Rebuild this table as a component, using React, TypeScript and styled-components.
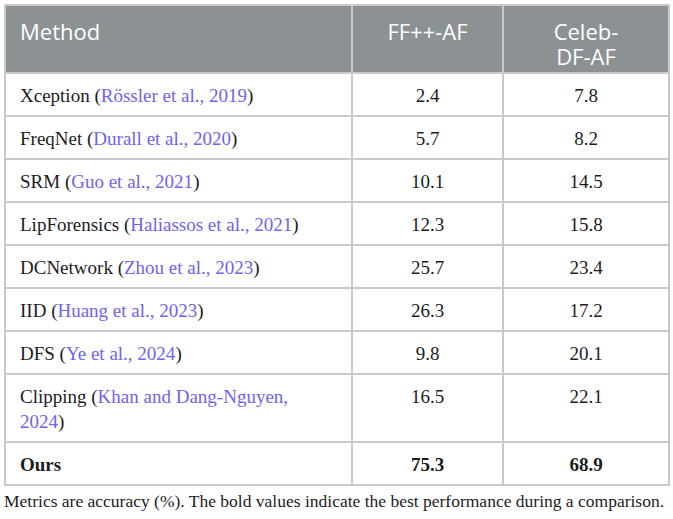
import styled, { createGlobalStyle } from "styled-components";

const GlobalStyle = createGlobalStyle`
  body {
    margin: 0;
    background: #ffffff;
  }
`;

type Row = {
  method: string;
  cite?: string;
  ff: string;
  celeb: string;
  best?: boolean;
};

const rows: Row[] = [
  { method: "Xception", cite: "Rössler et al., 2019", ff: "2.4", celeb: "7.8" },
  { method: "FreqNet", cite: "Durall et al., 2020", ff: "5.7", celeb: "8.2" },
  { method: "SRM", cite: "Guo et al., 2021", ff: "10.1", celeb: "14.5" },
  { method: "LipForensics", cite: "Haliassos et al., 2021", ff: "12.3", celeb: "15.8" },
  { method: "DCNetwork", cite: "Zhou et al., 2023", ff: "25.7", celeb: "23.4" },
  { method: "IID", cite: "Huang et al., 2023", ff: "26.3", celeb: "17.2" },
  { method: "DFS", cite: "Ye et al., 2024", ff: "9.8", celeb: "20.1" },
  { method: "Clipping", cite: "Khan and Dang-Nguyen, 2024", ff: "16.5", celeb: "22.1" },
  { method: "Ours", ff: "75.3", celeb: "68.9", best: true },
];

const App = () => {
  return (
    <>
      <GlobalStyle />
      <Page>
        <Table>
          <colgroup>
            <col style={{ width: 347 }} />
            <col style={{ width: 151 }} />
            <col style={{ width: 166 }} />
          </colgroup>
          <thead>
            <tr>
              <HeadCell>Method</HeadCell>
              <HeadCell $center>FF++-AF</HeadCell>
              <HeadCell $center>
                Celeb-
                <br />
                DF-AF
              </HeadCell>
            </tr>
          </thead>
          <tbody>
            {rows.map((r) => (
              <tr key={r.method}>
                <MethodCell $bold={r.best}>
                  {r.cite ? `${r.method} (` : r.method}
                  {r.cite && <Cite>{r.cite}</Cite>}
                  {r.cite && ")"}
                </MethodCell>
                <Cell $center $bold={r.best}>{r.ff}</Cell>
                <Cell $center $bold={r.best}>{r.celeb}</Cell>
              </tr>
            ))}
          </tbody>
        </Table>
        <Note>
          Metrics are accuracy (%). The bold values indicate the best performance during a comparison.
        </Note>
      </Page>
    </>
  );
};

export default App;

const Page = styled.div`
  padding: 4px 4px 0 4px;
  width: 664px;
`;

const Table = styled.table`
  width: 664px;
  border-collapse: collapse;
  table-layout: fixed;
`;

const HeadCell = styled.th<{ $center?: boolean }>`
  background: #8c9193;
  color: #ffffff;
  font-family: "Open Sans", "Noto Sans", sans-serif;
  font-weight: 400;
  font-size: 22px;
  line-height: 25px;
  text-align: ${(p) => (p.$center ? "center" : "left")};
  vertical-align: top;
  padding: 13px 14px 3px;
  border: 2px solid #c9cbcb;
`;

const Cell = styled.td<{ $center?: boolean; $bold?: boolean }>`
  font-family: "Liberation Serif", "Times New Roman", serif;
  font-size: 19px;
  line-height: 25px;
  color: #1c1c1c;
  font-weight: ${(p) => (p.$bold ? 700 : 400)};
  text-align: ${(p) => (p.$center ? "center" : "left")};
  vertical-align: top;
  padding: 9px 14px 7px;
  border: 2px solid #c9c9c9;
`;

const MethodCell = styled(Cell)`
  padding-right: 34px;
`;

const Cite = styled.span`
  color: #7062f2;
`;

const Note = styled.p`
  margin: 4px 0 0;
  font-family: "Liberation Serif", "Times New Roman", serif;
  font-size: 17.5px;
  line-height: 22px;
  color: #1c1c1c;
  white-space: nowrap;
`;
